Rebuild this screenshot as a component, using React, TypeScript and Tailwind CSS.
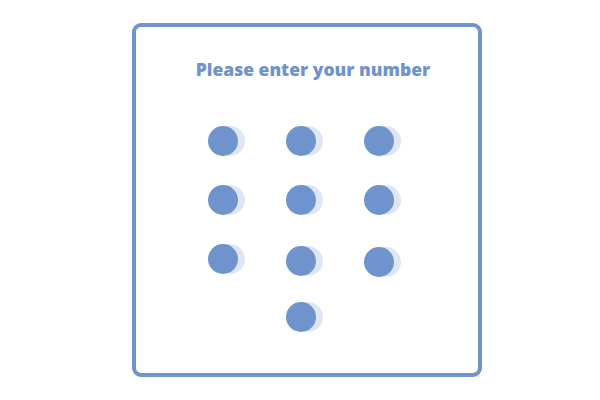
import React from 'react';

// keypad dots: row/col plus a small nudge for the slightly uneven third row
const dots = [
    { key: 1, nudge: 'mt-0' },
    { key: 2, nudge: 'mt-0' },
    { key: 3, nudge: 'mt-0' },
    { key: 4, nudge: 'mt-0' },
    { key: 5, nudge: 'mt-0' },
    { key: 6, nudge: 'mt-0' },
    { key: 7, nudge: 'mt-0' },
    { key: 8, nudge: 'mt-[2px]' },
    { key: 9, nudge: 'mt-[3px]' },
];

const Dot = ({ className = '' }: { className?: string }) => (
    <div className={`w-[30px] h-[30px] rounded-full bg-[#6f93cc] shadow-[7px_0_0_#dfe6f3] ${className}`}></div>
);

export default function App() {
    return (
        <div className="w-[600px] h-[400px] bg-white pl-[132px] pt-[23px]" style={{ fontFamily: '"Open Sans", sans-serif' }}>
            <div className="w-[350px] h-[354px] border-4 border-[#6f93cc] rounded-[9px] flex flex-col">
                <h1 className="mt-[30px] pl-[12px] text-center text-[17.5px] leading-[24px] font-extrabold text-[#6f93cc]">
                    Please enter your number
                </h1>
                <div className="ml-[72px] mt-[45px] grid grid-cols-[78px_78px_78px] gap-y-[29px]">
                    {dots.map(d => (
                        <div key={d.key} className="h-[30px]">
                            <Dot className={d.nudge} />
                        </div>
                    ))}
                    <div className="col-start-2 h-[30px]">
                        <Dot className="-mt-[1px]" />
                    </div>
                </div>
            </div>
        </div>
    );
}
